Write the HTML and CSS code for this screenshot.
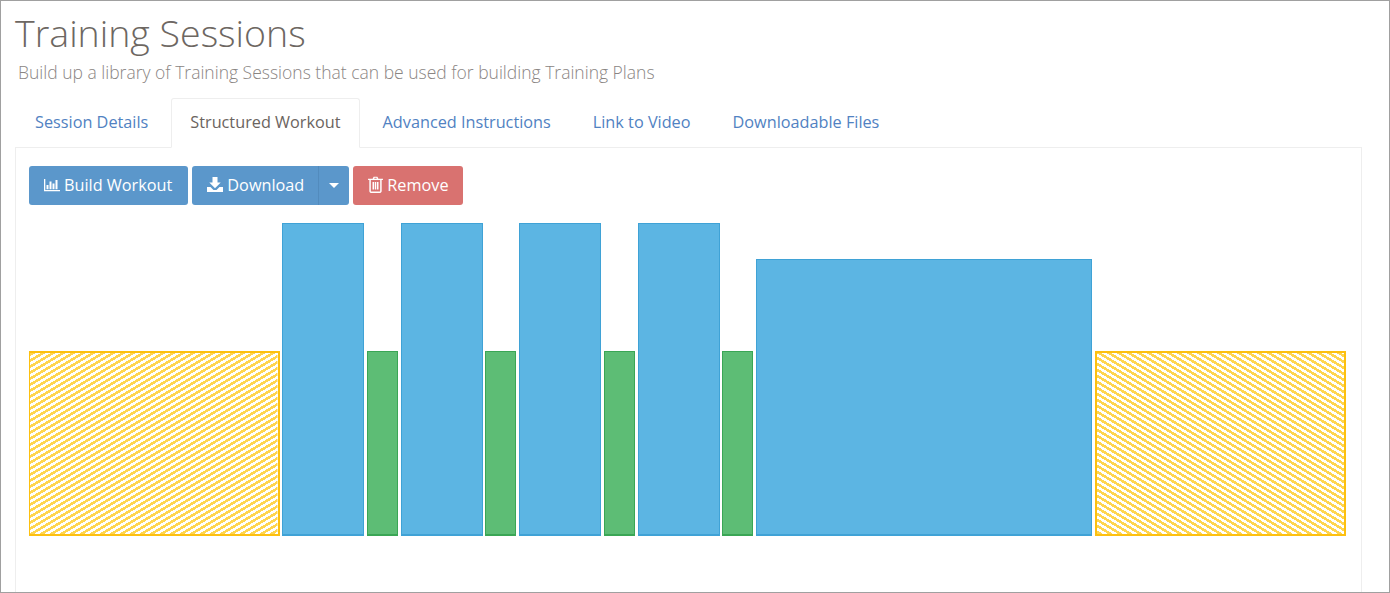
FILE: index.html
```html
<!DOCTYPE html>
<html lang="en">
<head>
<meta charset="utf-8">
<title>Training Sessions</title>
<link rel="stylesheet" href="styles.css">
</head>
<body>
<div class="frame">
  <span class="frame-gap"></span>
  <h1 class="title">Training Sessions</h1>
  <p class="subtitle">Build up a library of Training Sessions that can be used for building Training Plans</p>
  <ul class="tabs">
    <li class="tab"><a>Session Details</a></li>
    <li class="tab active"><a>Structured Workout</a></li>
    <li class="tab"><a>Advanced Instructions</a></li>
    <li class="tab"><a>Link to Video</a></li>
    <li class="tab"><a>Downloadable Files</a></li>
  </ul>
  <section class="panel">
    <div class="toolbar">
      <button class="btn blue build">
        <svg class="icon" viewBox="0 0 16 14" width="16" height="14"><path fill="#fff" d="M0 1h1.300v11H16v1.300H0zM2.500 7h2v4.200h-2zM5.500 3.500h2v7.700h-2zM8.500 5.500h2v5.700h-2zM11.500 2h2v9.200h-2z"/></svg>
        Build Workout
      </button>
      <div class="split">
        <button class="btn blue split-main">
          <svg class="icon" viewBox="0 0 16 15" width="16" height="15"><path fill="#fff" d="M5.500 0h5v5.500h3.200L8 11.200 2.300 5.500h3.200zM0 10h3.500l3 3h3l3-3H16v5H0zM11.500 12.300h1v1h-1zM13.500 12.300h1v1h-1z"/></svg>
          Download
        </button>
        <button class="btn blue split-caret"><span class="caret"></span></button>
      </div>
      <button class="btn red remove">
        <svg class="icon" viewBox="0 0 14 16" width="15" height="17"><path fill="#fff" fill-rule="evenodd" d="M4.300 2.500 5.200.6h3.600l.9 1.900H14v1.300h-1.200v10.400c0 .9-.6 1.800-1.500 1.800H2.700c-.9 0-1.500-.9-1.500-1.800V3.800H0V2.500zM5.800 2.500h2.400l-.4-.8H6.200zM2.600 3.800v10.400c0 .3.100.5.300.5h8.200c.2 0 .3-.2.300-.5V3.800zM4.200 5.700h1.400v7.100H4.200zM6.300 5.700h1.400v7.100H6.300zM8.400 5.700h1.400v7.100H8.400z"/></svg>
        Remove
      </button>
    </div>
    <div class="chart">
      <div class="bar warmup">
        <svg class="hatch" width="100%" height="100%"><defs><pattern id="hatch-up" width="10" height="6" patternUnits="userSpaceOnUse"><path class="stripe" shape-rendering="crispEdges" d="M0 0h5v1H0zM8 1h2v1H8zM0 1h3v1H0zM6 2h4v1H6zM0 2h1v1H0zM5 3h5v1H5zM3 4h5v1H3zM1 5h5v1H1z"/></pattern></defs><rect width="100%" height="100%" fill="url(#hatch-up)"/></svg>
      </div>
      <div class="bar work"></div>
      <div class="bar rest"></div>
      <div class="bar work"></div>
      <div class="bar rest"></div>
      <div class="bar work"></div>
      <div class="bar rest"></div>
      <div class="bar work"></div>
      <div class="bar rest"></div>
      <div class="bar steady"></div>
      <div class="bar warmup-end">
        <svg class="hatch" width="100%" height="100%"><defs><pattern id="hatch-down" width="10" height="6" patternUnits="userSpaceOnUse"><path class="stripe" shape-rendering="crispEdges" d="M0 0h5v1H0zM2 1h5v1H2zM4 2h5v1H4zM5 3h5v1H5zM7 4h3v1H7zM0 4h2v1H0zM9 5h1v1H9zM0 5h4v1H0z"/></pattern></defs><rect width="100%" height="100%" fill="url(#hatch-down)"/></svg>
      </div>
    </div>
  </section>
</div>
</body>
</html>
```
FILE: styles.css
```css
* { box-sizing: border-box; }
html, body { margin: 0; padding: 0; background: #fff; }
body { font-family: "Open Sans", sans-serif; color: #6b6460; overflow: hidden; }
.frame {
  position: relative;
  width: 1390px;
  height: 593px;
  border: 1px solid #a0a0a0;
  padding: 0 27.500px 0 14px;
  overflow: hidden;
}
.frame-gap {
  position: absolute;
  top: 11px;
  right: -1px;
  width: 1px;
  height: 65px;
  background: #fff;
}
.title {
  margin: 0;
  padding-top: 9px;
  font-size: 37.500px;
  font-weight: 300;
  line-height: 45px;
  color: #6d6762;
  white-space: nowrap;
}
.subtitle {
  margin: 6px 0 0 3px;
  font-size: 17.500px;
  font-weight: 300;
  line-height: 22px;
  color: #8a8583;
  white-space: nowrap;
}
.tabs {
  display: flex;
  list-style: none;
  margin: 15px 0 0;
  padding: 0;
  height: 49px;
}
.tab {
  margin-right: 2px;
  font-size: 16.250px;
  line-height: 22px;
}
.tab a {
  display: block;
  height: 49px;
  padding: 13px 20px;
  color: #5182c2;
}
.tab.active { position: relative; z-index: 1; margin: 0 3px -1px 1px; }
.tab.active a {
  height: 50px;
  padding: 12px 18px;
  border: 1px solid #eee;
  border-bottom-color: #fff;
  border-radius: 3px 3px 0 0;
  color: #6b6460;
  background: #fff;
}
.panel {
  border: 1px solid #eee;
  border-bottom: 0;
  height: 446px;
  padding: 18px 15px 0 13px;
}
.toolbar { display: flex; gap: 4px; }
.btn {
  display: inline-flex;
  align-items: center;
  justify-content: center;
  gap: 4px;
  height: 39px;
  padding: 0 15px 2px;
  border: 0;
  border-radius: 3px;
  font: 400 16.250px "Open Sans", sans-serif;
  color: #fff;
}
.build { padding-right: 16px; }
.remove { padding-right: 14px; }
.blue { background: #5b97cb; }
.red { background: #d97270; }
.icon { flex: none; }
.split { display: flex; }
.split-main { border-radius: 3px 0 0 3px; padding: 0 14px 2px 15px; }
.split-caret {
  width: 31px;
  padding: 0;
  border-left: 1px solid #528bbd;
  border-radius: 0 3px 3px 0;
}
.caret {
  width: 0;
  height: 0;
  border: 5px solid transparent;
  border-top-color: #fff;
  border-bottom: 0;
}
.chart {
  display: flex;
  align-items: flex-end;
  gap: 2.546875px;
  height: 313px;
  margin-top: 18px;
}
.bar { flex: none; border: 1px solid; }
.work { width: 82px; height: 313px; background: #5cb5e3; border-color: #3fa2d6; border-bottom-width: 2px; }
.steady { width: 336px; height: 277px; background: #5cb5e3; border-color: #3fa2d6; border-bottom-width: 2px; }
.rest { width: 31.390625px; height: 185px; background: #5dbd75; border-color: #3aa655; border-bottom-width: 2px; }
.warmup, .warmup-end { height: 185px; border-color: #fdc010; border-width: 2px; }
.warmup { width: 250.500px; border-left-width: 1px; }
.warmup-end { width: 251px; }
.hatch { display: block; }
.stripe { fill: #ffd54f; }
```
